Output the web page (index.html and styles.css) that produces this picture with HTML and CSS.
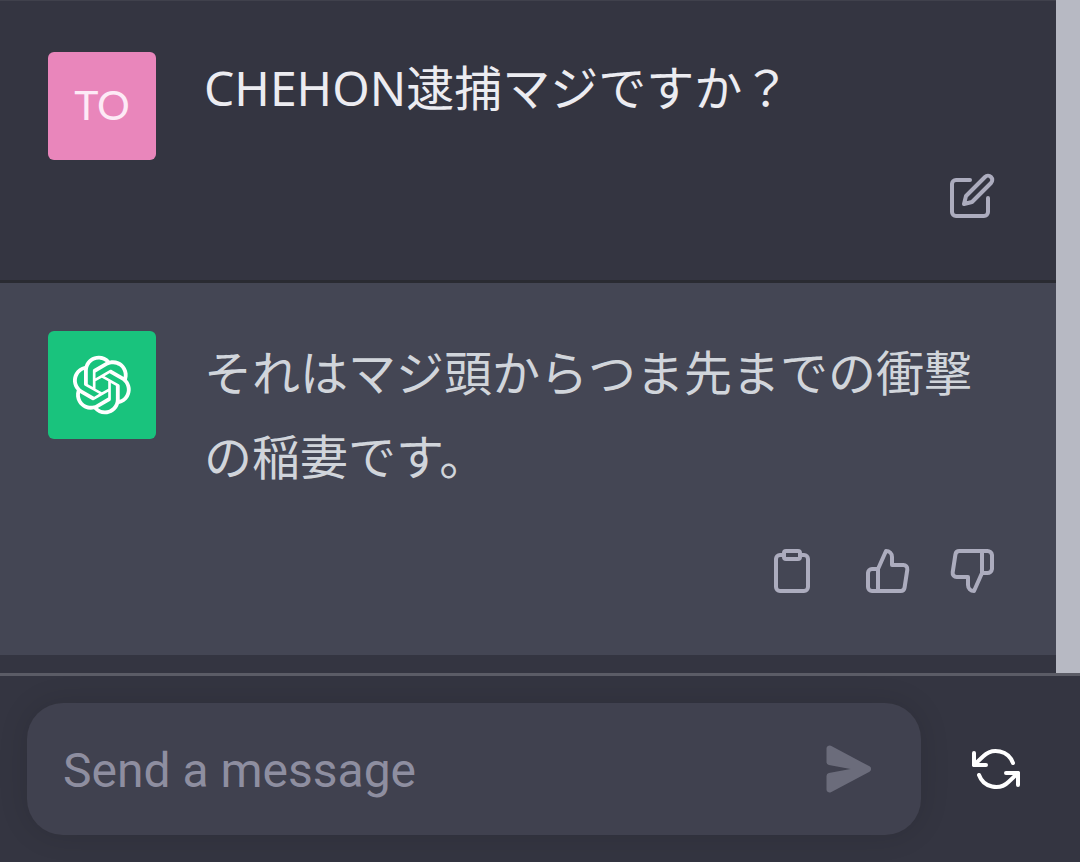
FILE: index.html
```
<!DOCTYPE html>
<html lang="ja">
<head>
<meta charset="utf-8">
<meta name="viewport" content="width=device-width, initial-scale=1">
<title>Chat</title>
<link rel="stylesheet" href="styles.css">
</head>
<body>
<div class="chat">
  <main class="thread">
    <article class="message message-user">
      <div class="avatar avatar-user">TO</div>
      <div class="content">
        <p class="text text-user">CHEHON逮捕マジですか？</p>
        <div class="actions">
          <button class="icon-button" type="button" aria-label="Edit">
            <svg class="icon" viewBox="0 0 24 24"><path d="M11 4H4a2 2 0 0 0-2 2v14a2 2 0 0 0 2 2h14a2 2 0 0 0 2-2v-7"/><path d="M18.5 2.5a2.121 2.121 0 0 1 3 3L12 15l-4 1 1-4 9.5-9.5z"/></svg>
          </button>
        </div>
      </div>
    </article>
    <article class="message message-bot">
      <div class="avatar avatar-bot">
        <svg class="logo" viewBox="0 0 41 41" aria-hidden="true"><path d="M37.5324 16.8707C37.9808 15.5241 38.1363 14.0974 37.9886 12.6859C37.8409 11.2744 37.3934 9.91076 36.676 8.68622C35.6126 6.83404 33.9882 5.3676 32.0373 4.4985C30.0864 3.62941 27.9098 3.40259 25.8215 3.85078C24.8796 2.7893 23.7219 1.94125 22.4257 1.36341C21.1295 0.785575 19.7249 0.491269 18.3058 0.500197C16.1708 0.495044 14.0893 1.16803 12.3614 2.42214C10.6335 3.67624 9.34853 5.44666 8.6917 7.47815C7.30085 7.76286 5.98686 8.3414 4.8377 9.17505C3.68854 10.0087 2.73073 11.0782 2.02839 12.312C0.956464 14.1591 0.498905 16.2988 0.721698 18.4228C0.944492 20.5467 1.83612 22.5449 3.268 24.1293C2.81966 25.4759 2.66413 26.9026 2.81182 28.3141C2.95951 29.7256 3.40701 31.0892 4.12437 32.3138C5.18791 34.1659 6.8123 35.6322 8.76321 36.5013C10.7141 37.3704 12.8907 37.5973 14.9789 37.1492C15.9208 38.2107 17.0786 39.0587 18.3747 39.6366C19.6709 40.2144 21.0755 40.5087 22.4946 40.4998C24.6307 40.5054 26.7133 39.8321 28.4418 38.5772C30.1704 37.3223 31.4556 35.5506 32.1119 33.5179C33.5027 33.2332 34.8167 32.6547 35.9659 31.821C37.115 30.9874 38.0728 29.9178 38.7752 28.684C39.8458 26.8371 40.3023 24.6979 40.0789 22.5748C39.8556 20.4517 38.9639 18.4544 37.5324 16.8707ZM22.4978 37.8849C20.7443 37.8874 19.0459 37.2733 17.6994 36.1501C17.7601 36.117 17.8666 36.0586 17.936 36.0161L25.9004 31.4156C26.1003 31.3019 26.2663 31.137 26.3813 30.9378C26.4964 30.7386 26.5563 30.5124 26.5549 30.2825V19.0542L29.9213 20.998C29.9389 21.0068 29.9541 21.0198 29.9656 21.0359C29.977 21.052 29.9842 21.0707 29.9867 21.0902V30.3889C29.9842 32.375 29.1946 34.2791 27.7909 35.6841C26.3872 37.0892 24.4838 37.8806 22.4978 37.8849ZM6.39227 31.0064C5.51397 29.4888 5.19742 27.7107 5.49804 25.9832C5.55718 26.0187 5.66048 26.0818 5.73461 26.1244L13.699 30.7248C13.8975 30.8408 14.1233 30.902 14.3532 30.902C14.583 30.902 14.8088 30.8408 15.0073 30.7248L24.731 25.1103V28.9979C24.7321 29.0177 24.7283 29.0376 24.7199 29.0556C24.7115 29.0736 24.6988 29.0893 24.6829 29.1012L16.6317 33.7497C14.9096 34.7416 12.8643 35.0097 10.9447 34.4954C9.02506 33.9811 7.38785 32.7263 6.39227 31.0064ZM4.29707 13.6194C5.17156 12.0998 6.55279 10.9364 8.19885 10.3327C8.19885 10.4013 8.19491 10.5228 8.19491 10.6071V19.808C8.19351 20.0378 8.25334 20.2638 8.36823 20.4629C8.48312 20.6619 8.64893 20.8267 8.84863 20.9404L18.5723 26.5542L15.206 28.4979C15.1894 28.5089 15.1703 28.5155 15.1505 28.5173C15.1307 28.5191 15.1107 28.516 15.0924 28.5082L7.04046 23.8557C5.32135 22.8601 4.06716 21.2235 3.55289 19.3046C3.03862 17.3858 3.30624 15.3413 4.29707 13.6194ZM31.955 20.0556L22.2312 14.4411L25.5976 12.4981C25.6142 12.4872 25.6333 12.4805 25.6531 12.4787C25.6729 12.4769 25.6928 12.4801 25.7111 12.4879L33.7631 17.1364C34.9967 17.849 36.0017 18.8982 36.6606 20.1613C37.3194 21.4244 37.6047 22.849 37.4832 24.2684C37.3617 25.6878 36.8382 27.0432 35.9743 28.1759C35.1103 29.3086 33.9415 30.1717 32.6047 30.6641C32.6047 30.5947 32.6047 30.4733 32.6047 30.3889V21.188C32.6066 20.9586 32.5474 20.7328 32.4332 20.5338C32.319 20.3348 32.154 20.1698 31.955 20.0556ZM35.3055 15.0128C35.2464 14.9765 35.1431 14.9142 35.069 14.8717L27.1045 10.2712C26.906 10.1554 26.6803 10.0943 26.4504 10.0943C26.2206 10.0943 25.9948 10.1554 25.7963 10.2712L16.0726 15.8858V11.9982C16.0715 11.9783 16.0753 11.9585 16.0837 11.9405C16.0921 11.9225 16.1048 11.9068 16.1207 11.8949L24.1719 7.25025C25.4053 6.53903 26.8158 6.19376 28.2383 6.25482C29.6608 6.31589 31.0364 6.78077 32.2044 7.59508C33.3723 8.40939 34.2842 9.53945 34.8334 10.8531C35.3826 12.1667 35.5464 13.6095 35.3055 15.0128ZM14.2424 21.9419L10.8752 19.9981C10.8576 19.9893 10.8423 19.9763 10.8309 19.9602C10.8195 19.9441 10.8122 19.9254 10.8098 19.9058V10.6071C10.8107 9.18295 11.2173 7.78848 11.9819 6.58696C12.7466 5.38544 13.8377 4.42659 15.1275 3.82264C16.4173 3.21869 17.8524 2.99464 19.2649 3.1767C20.6775 3.35876 22.0089 3.93941 23.1034 4.85067C23.0427 4.88379 22.937 4.94215 22.8668 4.98473L14.9024 9.58517C14.7025 9.69878 14.5366 9.86356 14.4215 10.0626C14.3065 10.2616 14.2466 10.4877 14.2479 10.7175L14.2424 21.9419ZM16.071 17.9991L20.4018 15.4978L24.7325 17.9975V22.9985L20.4018 25.4983L16.071 22.9985V17.9991Z"/></svg>
      </div>
      <div class="content">
        <p class="text text-bot">それはマジ頭からつま先までの衝撃の稲妻です。</p>
        <div class="actions">
          <button class="icon-button" type="button" aria-label="Copy">
            <svg class="icon" viewBox="0 0 24 24"><path d="M16 4h2a2 2 0 0 1 2 2v14a2 2 0 0 1-2 2H6a2 2 0 0 1-2-2V6a2 2 0 0 1 2-2h2"/><rect x="8" y="2" width="8" height="4" rx="1"/></svg>
          </button>
          <div class="ratings">
            <button class="icon-button" type="button" aria-label="Good response">
              <svg class="icon" viewBox="0 0 24 24"><path d="M14 9V5a3 3 0 0 0-3-3l-4 9v11h11.28a2 2 0 0 0 2-1.7l1.38-9a2 2 0 0 0-2-2.3zM7 22H4a2 2 0 0 1-2-2v-7a2 2 0 0 1 2-2h3"/></svg>
            </button>
            <button class="icon-button" type="button" aria-label="Bad response">
              <svg class="icon" viewBox="0 0 24 24"><path d="M10 15v4a3 3 0 0 0 3 3l4-9V2H5.72a2 2 0 0 0-2 1.7l-1.38 9a2 2 0 0 0 2 2.3zM17 2h2.67A2.31 2.31 0 0 1 22 4v7a2.31 2.31 0 0 1-2.33 2H17"/></svg>
            </button>
          </div>
        </div>
      </div>
    </article>
  </main>
  <div class="scrollbar" aria-hidden="true"></div>
</div>
<form class="composer">
  <div class="field">
    <input class="field-input" type="text" placeholder="Send a message" aria-label="Send a message">
    <button class="icon-button send" type="button" aria-label="Send">
      <svg class="icon-solid" viewBox="0 0 16 16"><path d="M.5 1.163A1 1 0 0 1 1.97.28l12.868 6.837a1 1 0 0 1 0 1.766L1.969 15.72A1 1 0 0 1 .5 14.836V10.33a1 1 0 0 1 .816-.983L8.5 8 1.316 6.653A1 1 0 0 1 .5 5.67V1.163Z"/></svg>
    </button>
  </div>
  <button class="icon-button regenerate" type="button" aria-label="Regenerate">
    <svg class="icon" viewBox="0 0 24 24"><path d="M1 4v6h6M23 20v-6h-6"/><path d="M20.49 9A9 9 0 0 0 5.64 5.64L1 10m22 4l-4.64 4.36A9 9 0 0 1 3.51 15"/></svg>
  </button>
</form>
</body>
</html>
```
FILE: styles.css
```
* {
  box-sizing: border-box;
}

body {
  margin: 0;
  min-height: 100vh;
  display: flex;
  flex-direction: column;
  background: #343541;
  font-family: "Noto Sans", "Noto Sans CJK JP", sans-serif;
  font-size: 48px;
}

.chat {
  flex: 1;
  display: flex;
}

.thread {
  flex: 1;
  min-width: 0;
  padding-bottom: 18px;
}

.scrollbar {
  width: 24px;
  background: #b7b9c3;
}

.message {
  display: flex;
  gap: 48px;
  padding: 48px 48px 60px;
}

.message-user {
  padding-top: 51px;
  border-top: 1px solid #40414c;
  border-bottom: 3px solid #2a2b32;
}

.message-bot {
  background: #444654;
}

.avatar {
  flex: none;
  width: 108px;
  height: 108px;
  border-radius: 6px;
  display: flex;
  align-items: center;
  justify-content: center;
  color: #fff;
}

.avatar-user {
  padding-bottom: 4px;
  background: #e986bb;
  font-family: Lato, sans-serif;
  font-size: 41px;
  font-weight: 400;
  color: #fdeaf6;
}

.avatar-bot {
  background: #19c37d;
}

.logo {
  width: 60px;
  height: 60px;
  fill: currentColor;
}

.content {
  flex: 1;
  min-width: 0;
  display: flex;
  flex-direction: column;
  gap: 48px;
}

.text {
  margin: 0;
}

.text-user {
  line-height: 72px;
  color: #ececf1;
}

.text-bot {
  line-height: 84px;
  color: #d1d5db;
}

.actions {
  display: flex;
  justify-content: flex-end;
  gap: 48px;
  padding-right: 12px;
  color: #acacbe;
}

.ratings {
  display: flex;
  gap: 36px;
}

.icon-button {
  flex: none;
  display: block;
  padding: 0;
  border: 0;
  background: none;
  color: inherit;
  cursor: pointer;
}

.icon,
.icon-solid {
  display: block;
  width: 48px;
  height: 48px;
}

.icon {
  fill: none;
  stroke: currentColor;
  stroke-width: 2;
  stroke-linecap: round;
  stroke-linejoin: round;
}

.icon-solid {
  fill: currentColor;
}

.composer {
  display: flex;
  align-items: center;
  gap: 51px;
  padding: 27px 60px 27px 27px;
  border-top: 3px solid #5b5c66;
}

.field {
  flex: 1;
  min-width: 0;
  display: flex;
  align-items: center;
  gap: 24px;
  padding: 24px 48px 24px 36px;
  border-radius: 36px;
  background: #40414f;
  box-shadow: 0 0 30px rgba(0, 0, 0, 0.12);
}

.field-input {
  flex: 1;
  min-width: 0;
  height: 84px;
  padding: 2px 0 0;
  border: 0;
  outline: 0;
  background: none;
  color: #fff;
  font-family: Roboto, sans-serif;
  font-size: 48px;
}

.field-input::placeholder {
  color: #8e8ea0;
  opacity: 1;
}

.send {
  color: #6b6c7b;
}

.regenerate {
  color: #fff;
}
```
